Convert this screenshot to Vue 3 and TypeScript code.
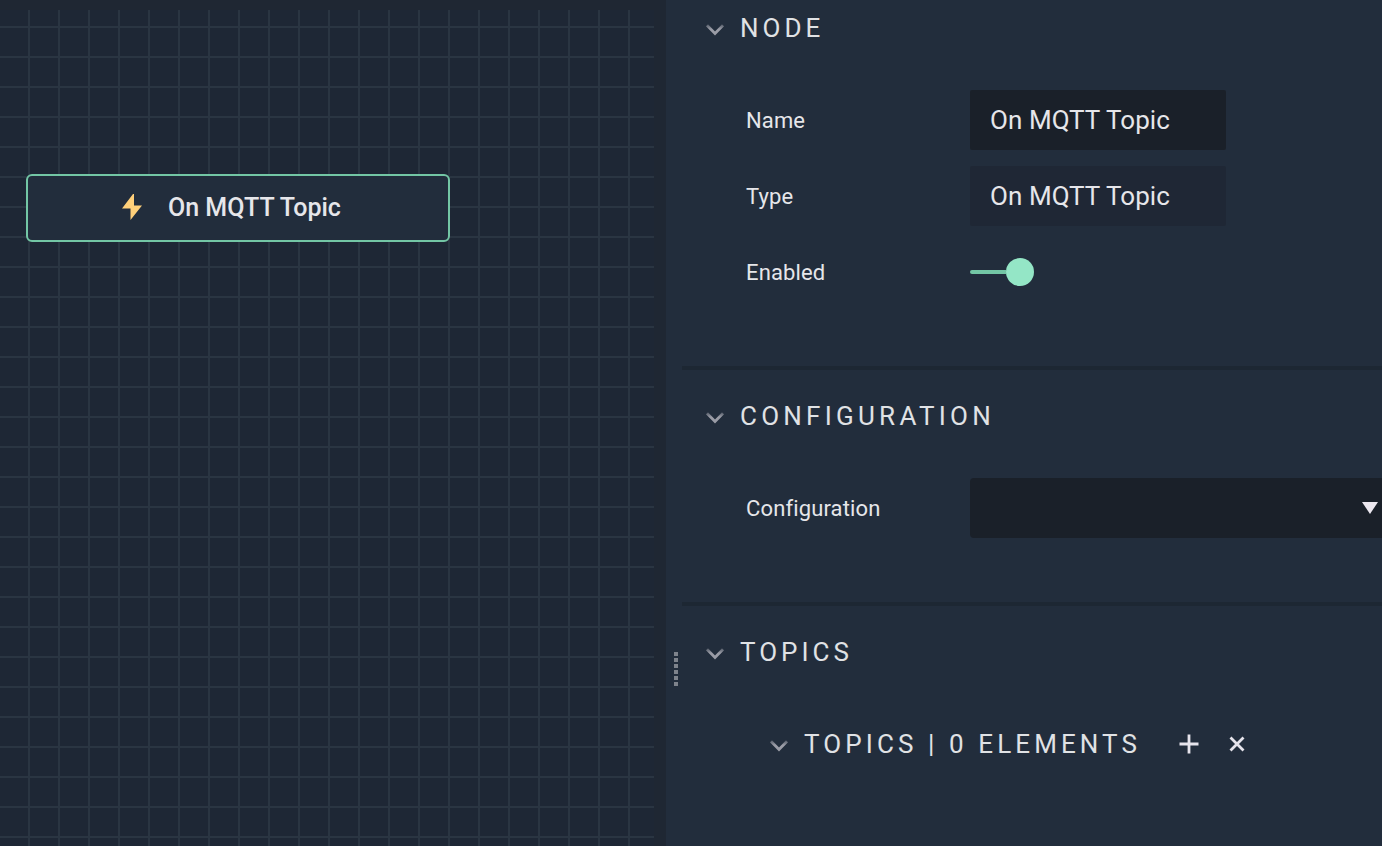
<script setup lang="ts">
import { ref } from 'vue'

const nodeName = ref('On MQTT Topic')
const nodeType = 'On MQTT Topic'
const enabled = ref(true)
const topics = ref<string[]>([])
const gripDots = 6
</script>

<template>
  <main class="editor">
    <section class="stage">
      <div class="canvas">
        <div class="node">
          <svg class="bolt" width="22" height="28" viewBox="0 0 22 28">
            <path d="M12 1 L1 15.5 H9.5 V27 L21 12.5 H13 V1 Z" fill="#ffd07a" />
          </svg>
          <span class="node-title">{{ nodeName }}</span>
        </div>
      </div>
    </section>

    <aside class="panel">
      <div class="grip"><i v-for="n in gripDots" :key="n" /></div>
      <div class="sections">
        <section class="section first">
          <h2 class="heading">
            <svg class="chevron" width="18" height="12" viewBox="0 0 18 12">
              <defs>
                <linearGradient id="chevron-fade" gradientUnits="userSpaceOnUse" x1="0" y1="0" x2="0" y2="5">
                  <stop offset="0" stop-color="#9a9ca6" stop-opacity="0.35" />
                  <stop offset="1" stop-color="#9a9ca6" />
                </linearGradient>
              </defs>
              <path d="M1 1.2 L9 9.4 L17 1.2" />
            </svg>
            <span class="caption">NODE</span>
          </h2>
          <div class="row">
            <span class="label">Name</span>
            <div class="field">{{ nodeName }}</div>
          </div>
          <div class="row">
            <span class="label">Type</span>
            <div class="field readonly">{{ nodeType }}</div>
          </div>
          <div class="row">
            <span class="label">Enabled</span>
            <div class="toggle" :class="{ on: enabled }"><span class="track" /><span class="knob" /></div>
          </div>
        </section>

        <section class="section second">
          <h2 class="heading">
            <svg class="chevron" width="18" height="12" viewBox="0 0 18 12"><path d="M1 1.2 L9 9.4 L17 1.2" /></svg>
            <span class="caption conf">CONFIGURATION</span>
          </h2>
          <div class="row">
            <span class="label">Configuration</span>
            <div class="select">
              <svg width="16" height="12" viewBox="0 0 16 12"><path d="M0 0 H16 L8 12 Z" fill="#ebe7ef" /></svg>
            </div>
          </div>
        </section>

        <section class="section third">
          <h2 class="heading">
            <svg class="chevron" width="18" height="12" viewBox="0 0 18 12"><path d="M1 1.2 L9 9.4 L17 1.2" /></svg>
            <span class="caption">TOPICS</span>
          </h2>
          <h3 class="heading nested">
            <svg class="chevron" width="18" height="12" viewBox="0 0 18 12"><path d="M1 1.2 L9 9.4 L17 1.2" /></svg>
            <span class="caption elements">TOPICS | {{ topics.length }} ELEMENTS</span>
            <svg class="plus" width="20" height="20" viewBox="0 0 20 20"><path d="M10 .5 V19.5 M.5 10 H19.5" /></svg>
            <svg class="cross" width="16" height="16" viewBox="0 0 16 16"><path d="M1.5 1.5 L14.5 14.5 M14.5 1.5 L1.5 14.5" /></svg>
          </h3>
        </section>
      </div>
    </aside>
  </main>
</template>

<style>
body {
  margin: 0;
  overflow: hidden;
}
</style>

<style scoped>
.editor {
  display: flex;
  width: 100vw;
  height: 100vh;
  overflow: hidden;
  background: #1f2733;
  color: #e6e6ea;
  font-family: Roboto, "Liberation Sans", sans-serif;
}
.stage {
  flex: 0 0 654px;
  box-sizing: border-box;
  padding: 10px 0 0;
  margin-right: 12px;
}
.canvas {
  box-sizing: border-box;
  height: 100%;
  padding: 164px 0 0 26px;
  background-color: #1e2735;
  background-image:
    linear-gradient(90deg, #2a3542 2px, transparent 2px),
    linear-gradient(#2a3542 2px, transparent 2px);
  background-size: 30px 30px;
  background-position: 28px 0, 0 16px;
}
.node {
  display: flex;
  align-items: center;
  box-sizing: border-box;
  width: 424px;
  height: 68px;
  padding-left: 93px;
  border: 2px solid #73c6a5;
  border-radius: 6px;
  background: #222d3c;
}
.bolt {
  margin-top: -3px;
}
.node-title {
  margin-left: 25px;
  font-size: 25px;
  font-weight: 500;
  line-height: 30px;
  white-space: nowrap;
}
.panel {
  display: flex;
  flex: 1;
  min-width: 0;
  background: #222d3c;
}
.grip {
  display: flex;
  flex: 0 0 16px;
  flex-direction: column;
  align-items: flex-end;
  gap: 2px;
  box-sizing: border-box;
  padding: 652px 4px 0 0;
}
.grip i {
  width: 4px;
  height: 4px;
  background: #7e838c;
}
.sections {
  flex: 1;
  min-width: 0;
}
.section {
  box-sizing: border-box;
  padding: 26px 0 0 24px;
  border-top: 4px solid #1d2733;
}
.first {
  height: 366px;
  padding-top: 8px;
  border-top: 0;
}
.second {
  height: 236px;
}
.third {
  height: 244px;
}
.heading {
  display: flex;
  align-items: center;
  height: 40px;
  margin: 0 0 42px;
  font-size: 26px;
  font-weight: 400;
  white-space: nowrap;
}
.chevron {
  flex: none;
  margin-top: 3px;
}
.chevron path {
  fill: none;
  stroke: url(#chevron-fade);
  stroke-width: 2.8;
}
.caption {
  margin-left: 16px;
  color: #e0e2e5;
  letter-spacing: 4px;
}
.caption.conf {
  letter-spacing: 4.25px;
}
.caption.elements {
  letter-spacing: 4.1px;
}
.row {
  display: flex;
  align-items: center;
  height: 60px;
  margin-bottom: 16px;
  padding-left: 40px;
}
.label {
  flex: 0 0 224px;
  font-size: 22px;
  letter-spacing: 0.13px;
}
.field {
  box-sizing: border-box;
  width: 256px;
  height: 60px;
  padding-left: 20px;
  border-radius: 2px;
  background: #1a2029;
  font-size: 26px;
  line-height: 60px;
  letter-spacing: 0.07px;
}
.field.readonly {
  background: #1f2735;
}
.toggle {
  display: flex;
  align-items: center;
}
.track {
  width: 36px;
  height: 4px;
  border-radius: 2px 0 0 2px;
  background: #73c6a5;
}
.knob {
  width: 28px;
  height: 28px;
  border-radius: 50%;
  background: #94e6c6;
}
.select {
  display: flex;
  flex: 1;
  align-items: center;
  justify-content: flex-end;
  box-sizing: border-box;
  height: 60px;
  padding-right: 4px;
  border-radius: 4px 0 0 4px;
  background: #1a2029;
}
.nested {
  margin: 52px 0 0 64px;
}
.plus {
  margin-left: 37.5px;
}
.cross {
  margin-left: 30px;
}
.plus path,
.cross path {
  fill: none;
  stroke: #e6e4ec;
  stroke-width: 2.8;
}
</style>
